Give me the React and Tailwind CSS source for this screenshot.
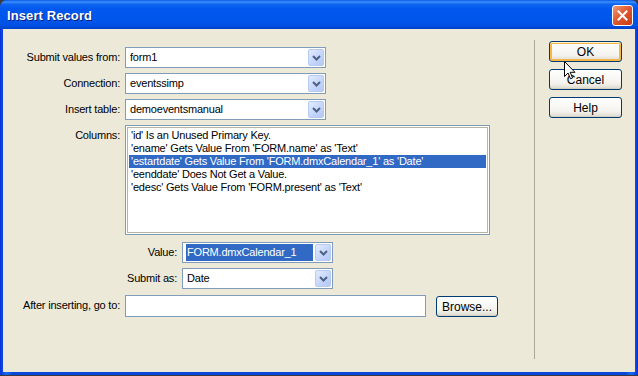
import React from "react";

const font = { fontFamily: '"Liberation Sans", Arial, sans-serif' };

function Chevron() {
  return (
    <svg width="9" height="6" viewBox="0 0 9 6">
      <path d="M1 1 L4.5 4.5 L8 1" fill="none" stroke="#4D6185" strokeWidth="2" />
    </svg>
  );
}

function Select({ value, width, selected }) {
  return (
    <div className={`${width} h-[21px] bg-white border border-[#7F9DB9] flex items-center p-px`}>
      <div className="flex-1 h-full flex items-center pl-[2px]">
        {selected ? (
          <span className="bg-[#316AC5] text-white h-[17px] leading-[17px] flex-1 mr-[2px] px-px">{value}</span>
        ) : (
          <span className="leading-[17px] pl-px">{value}</span>
        )}
      </div>
      <div className="w-[16px] h-[17px] rounded-[2px] border border-[#B6CAF3] bg-[linear-gradient(135deg,#E3ECFD,#C3D4FB_60%,#B3C8F5)] flex items-center justify-center">
        <Chevron />
      </div>
    </div>
  );
}

function XPButton({ children, isDefault, width = "w-[73px]" }) {
  return (
    <div
      className={`${width} h-[21px] rounded-[3px] border border-[#003C74] bg-[linear-gradient(to_bottom,#FFFFFF,#F4F3EE_70%,#DCD8CC)] flex items-center justify-center text-[12px] tracking-normal text-black ${
        isDefault ? "shadow-[inset_0_1px_0_#FFF0CF,inset_0_0_0_2px_#F7B746]" : "shadow-[inset_0_-1px_0_#D6D0C5]"
      }`}
    >
      {children}
    </div>
  );
}

const columns = [
  "'id' Is an Unused Primary Key.",
  "'ename' Gets Value From 'FORM.name' as 'Text'",
  "'estartdate' Gets Value From 'FORM.dmxCalendar_1' as 'Date'",
  "'eenddate' Does Not Get a Value.",
  "'edesc' Gets Value From 'FORM.present' as 'Text'",
];

export default function App() {
  return (
    <div className="w-[638px] h-[376px] bg-[#3A3A3A] overflow-hidden text-[11px] tracking-[-0.2px] text-black" style={font}>
      <div className="w-[638px] h-[375px] flex flex-col rounded-t-[7px] overflow-hidden bg-[#0A3FD6]">
        {/* title bar */}
        <div className="h-[29px] shrink-0 relative flex items-center px-[7px] pt-[2px] bg-[linear-gradient(to_bottom,#0A5AE8_0%,#3C8FFB_7%,#1165F0_14%,#0058EE_30%,#0055EA_70%,#0050E3_88%,#0041C8_100%)]">
          <span className="text-white font-bold text-[13px] tracking-[0.1px] [text-shadow:1px_1px_0_#0A1E74]">Insert Record</span>
          <div className="absolute right-[5px] top-[5px] w-[21px] h-[21px] rounded-[3px] border border-white bg-[linear-gradient(135deg,#F29A7A,#E15A32_45%,#C63A12)] flex items-center justify-center">
            <svg width="11" height="11" viewBox="0 0 11 11">
              <path d="M1.5 1.5 L9.5 9.5 M9.5 1.5 L1.5 9.5" stroke="white" strokeWidth="2" strokeLinecap="square" />
            </svg>
          </div>
        </div>

        {/* client frame */}
        <div className="flex-1 flex px-[3px] pb-[3px] bg-[linear-gradient(to_right,#0831D9,#166AEE_1%,#0A46DB_2%,#0A46DB_98%,#166AEE_99%,#0831D9)]">
          <div className="flex-1 bg-[#ECE9D8] flex">
            {/* form */}
            <div className="w-[531px] pt-[18px] flex flex-col">
              {[
                ["Submit values from:", "form1"],
                ["Connection:", "eventssimp"],
                ["Insert table:", "demoeventsmanual"],
              ].map(([label, val]) => (
                <div key={label} className="flex items-center gap-[5px] mb-[5px]">
                  <div className="w-[117px] text-right">{label}</div>
                  <Select value={val} width="w-[201px]" />
                </div>
              ))}

              <div className="flex gap-[5px] mb-[7px]">
                <div className="w-[117px] text-right pt-[2px]">Columns:</div>
                <div className="w-[365px] h-[110px] border border-[#7F9DB9] bg-white p-px">
                  <div className="w-full h-full border border-[#B8B4A8] pt-px pl-px pr-px">
                    {columns.map((c, i) => (
                      <div
                        key={c}
                        className={`h-[13px] leading-[13px] pl-[2px] whitespace-nowrap ${
                          i === 2 ? "bg-[#316AC5] text-white" : ""
                        }`}
                      >
                        {c}
                      </div>
                    ))}
                  </div>
                </div>
              </div>

              <div className="flex items-center gap-[5px] mb-[5px]">
                <div className="w-[174px] text-right">Value:</div>
                <Select value="FORM.dmxCalendar_1" width="w-[151px]" selected />
              </div>
              <div className="flex items-center gap-[5px] mb-[5px]">
                <div className="w-[174px] text-right">Submit as:</div>
                <Select value="Date" width="w-[151px]" />
              </div>
              <div className="flex items-center gap-[5px]">
                <div className="w-[117px] text-right">After inserting, go to:</div>
                <div className="w-[301px] h-[22px] border border-[#7F9DB9] bg-white" />
                <div className="ml-[5px] mt-[2px]">
                  <XPButton width="w-[62px]">Browse...</XPButton>
                </div>
              </div>
            </div>

            {/* separator */}
            <div className="w-px bg-[#ACA899] mt-[11px] mb-[13px]" />

            {/* buttons */}
            <div className="pl-[14px] pt-[12px] flex flex-col gap-[7px] relative">
              <XPButton isDefault>OK</XPButton>
              <XPButton>Cancel</XPButton>
              <XPButton>Help</XPButton>
              <svg
                className="absolute left-[29px] top-[32px]"
                width="12"
                height="19"
                viewBox="0 0 12 19"
              >
                <path
                  d="M0.5 0.5 L0.5 15.5 L4 12 L6.5 17.8 L8.6 16.9 L6.2 11.3 L11 11.3 Z"
                  fill="white"
                  stroke="black"
                  strokeWidth="1"
                  strokeLinejoin="miter"
                />
              </svg>
            </div>
          </div>
        </div>
      </div>
    </div>
  );
}
